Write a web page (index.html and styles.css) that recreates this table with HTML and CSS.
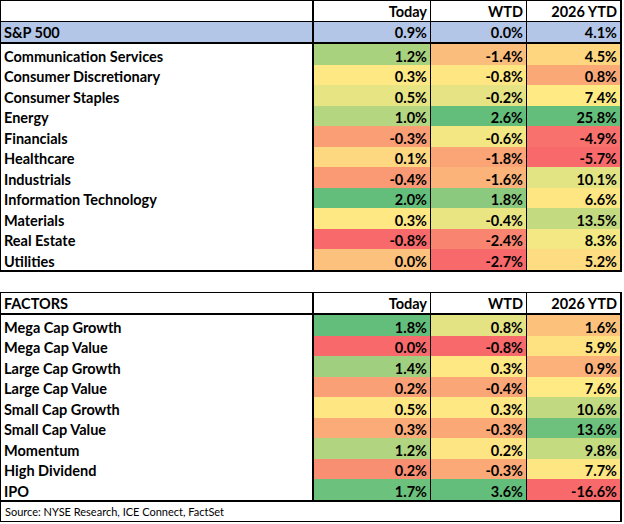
FILE: index.html
```html
<!DOCTYPE html>
<html>
<head>
<meta charset="utf-8">
<link rel="stylesheet" href="styles.css">
</head>
<body>
<div class="sheet">
  <div class="tbl t1">
    <div class="row head">
      <div class="c lbl"></div><div class="c n c2">Today</div><div class="c n c3">WTD</div><div class="c n c4">2026 YTD</div>
    </div>
    <div class="row idx">
      <div class="c lbl">S&amp;P 500</div><div class="c n c2">0.9%</div><div class="c n c3">0.0%</div><div class="c n c4">4.1%</div>
    </div>
    <div class="body">
      <div class="row"><div class="c lbl">Communication Services</div><div class="c n c2" style="background:#a9d27f">1.2%</div><div class="c n c3" style="background:#fbbd7b">-1.4%</div><div class="c n c4" style="background:#fed680">4.5%</div></div>
      <div class="row"><div class="c lbl">Consumer Discretionary</div><div class="c n c2" style="background:#fee883">0.3%</div><div class="c n c3" style="background:#fee783">-0.8%</div><div class="c n c4" style="background:#fba877">0.8%</div></div>
      <div class="row"><div class="c lbl">Consumer Staples</div><div class="c n c2" style="background:#e6e483">0.5%</div><div class="c n c3" style="background:#e5e383">-0.2%</div><div class="c n c4" style="background:#ffea84">7.4%</div></div>
      <div class="row"><div class="c lbl">Energy</div><div class="c n c2" style="background:#b5d680">1.0%</div><div class="c n c3" style="background:#63be7b">2.6%</div><div class="c n c4" style="background:#63be7b">25.8%</div></div>
      <div class="row"><div class="c lbl">Financials</div><div class="c n c2" style="background:#fa9e75">-0.3%</div><div class="c n c3" style="background:#f2e783">-0.6%</div><div class="c n c4" style="background:#f8716d">-4.9%</div></div>
      <div class="row"><div class="c lbl">Healthcare</div><div class="c n c2" style="background:#fed880">0.1%</div><div class="c n c3" style="background:#fba576">-1.8%</div><div class="c n c4" style="background:#f8696b">-5.7%</div></div>
      <div class="row"><div class="c lbl">Industrials</div><div class="c n c2" style="background:#f99a74">-0.4%</div><div class="c n c3" style="background:#fbb379">-1.6%</div><div class="c n c4" style="background:#e2e383">10.1%</div></div>
      <div class="row"><div class="c lbl">Information Technology</div><div class="c n c2" style="background:#63be7b">2.0%</div><div class="c n c3" style="background:#8bca7e">1.8%</div><div class="c n c4" style="background:#fee783">6.6%</div></div>
      <div class="row"><div class="c lbl">Materials</div><div class="c n c2" style="background:#fee883">0.3%</div><div class="c n c3" style="background:#eae583">-0.4%</div><div class="c n c4" style="background:#c4da80">13.5%</div></div>
      <div class="row"><div class="c lbl">Real Estate</div><div class="c n c2" style="background:#f8696b">-0.8%</div><div class="c n c3" style="background:#f98470">-2.4%</div><div class="c n c4" style="background:#f3e883">8.3%</div></div>
      <div class="row"><div class="c lbl">Utilities</div><div class="c n c2" style="background:#fcc17c">0.0%</div><div class="c n c3" style="background:#f8696b">-2.7%</div><div class="c n c4" style="background:#fedc81">5.2%</div></div>
    </div>
  </div>

  <div class="tbl t2">
    <div class="row head">
      <div class="c lbl">FACTORS</div><div class="c n c2">Today</div><div class="c n c3">WTD</div><div class="c n c4">2026 YTD</div>
    </div>
    <div class="body">
      <div class="row"><div class="c lbl">Mega Cap Growth</div><div class="c n c2" style="background:#63be7b">1.8%</div><div class="c n c3" style="background:#e3e383">0.8%</div><div class="c n c4" style="background:#fcc27c">1.6%</div></div>
      <div class="row"><div class="c lbl">Mega Cap Value</div><div class="c n c2" style="background:#f8696b">0.0%</div><div class="c n c3" style="background:#f8696b">-0.8%</div><div class="c n c4" style="background:#fee282">5.9%</div></div>
      <div class="row"><div class="c lbl">Large Cap Growth</div><div class="c n c2" style="background:#9fcf7f">1.4%</div><div class="c n c3" style="background:#fee883">0.3%</div><div class="c n c4" style="background:#fbb179">0.9%</div></div>
      <div class="row"><div class="c lbl">Large Cap Value</div><div class="c n c2" style="background:#f9a076">0.2%</div><div class="c n c3" style="background:#fba677">-0.4%</div><div class="c n c4" style="background:#ffea84">7.6%</div></div>
      <div class="row"><div class="c lbl">Small Cap Growth</div><div class="c n c2" style="background:#fee683">0.5%</div><div class="c n c3" style="background:#fee883">0.3%</div><div class="c n c4" style="background:#c1d980">10.6%</div></div>
      <div class="row"><div class="c lbl">Small Cap Value</div><div class="c n c2" style="background:#fbab78">0.3%</div><div class="c n c3" style="background:#fba877">-0.3%</div><div class="c n c4" style="background:#6dc17c">13.6%</div></div>
      <div class="row"><div class="c lbl">Momentum</div><div class="c n c2" style="background:#b0d480">1.2%</div><div class="c n c3" style="background:#fee583">0.2%</div><div class="c n c4" style="background:#c5db80">9.8%</div></div>
      <div class="row"><div class="c lbl">High Dividend</div><div class="c n c2" style="background:#f98f72">0.2%</div><div class="c n c3" style="background:#fbaa77">-0.3%</div><div class="c n c4" style="background:#fee683">7.7%</div></div>
      <div class="row"><div class="c lbl">IPO</div><div class="c n c2" style="background:#6cc17c">1.7%</div><div class="c n c3" style="background:#63be7b">3.6%</div><div class="c n c4" style="background:#f8696b">-16.6%</div></div>
    </div>
    <div class="source">Source: NYSE Research, ICE Connect, FactSet</div>
  </div>
</div>
</body>
</html>
```

FILE: styles.css
```css
html, body {
  margin: 0;
  padding: 0;
  background: #ffffff;
}

body {
  font-family: Lato, "Liberation Sans", sans-serif;
  color: #000000;
}

.sheet {
  width: 622px;
  display: flex;
  flex-direction: column;
  gap: 20.5px;
}

.tbl {
  border-left: 1px solid #000;
  border-right: 2px solid #000;
  border-top: 1px solid #000;
  border-bottom: 2px solid #000;
}

.row {
  display: grid;
  grid-template-columns: 311px 118px 96px 94px;
  height: 20.5px;
  font-weight: 700;
  font-size: 14.5px;
}

.t2 .body .row {
  height: 20.5px;
}

.c {
  box-sizing: border-box;
  padding: 0 3px 0.5px;
  display: flex;
  align-items: flex-end;
  line-height: 1;
  white-space: nowrap;
}

.n {
  justify-content: flex-end;
}

.c2 {
  border-left: 2px solid #000;
}

.c3, .c4 {
  border-left: 1px solid #000;
}

.head {
  height: 20px;
  border-bottom: 1px solid #000;
}

.head .c,
.idx .c {
  padding-bottom: 2px;
}

.t2 .head {
  border-bottom: 2px solid #000;
}

.idx {
  height: 20px;
  background: #b4c6e7;
  border-bottom: 2px solid #000;
}

.source {
  border-top: 2px solid #000;
  height: 21.5px;
  box-sizing: border-box;
  padding: 0 4px 4px;
  display: flex;
  align-items: flex-end;
  font-size: 11px;
  font-weight: 400;
  line-height: 1;
}

.t2 {
  border-bottom-width: 1px;
}
```
